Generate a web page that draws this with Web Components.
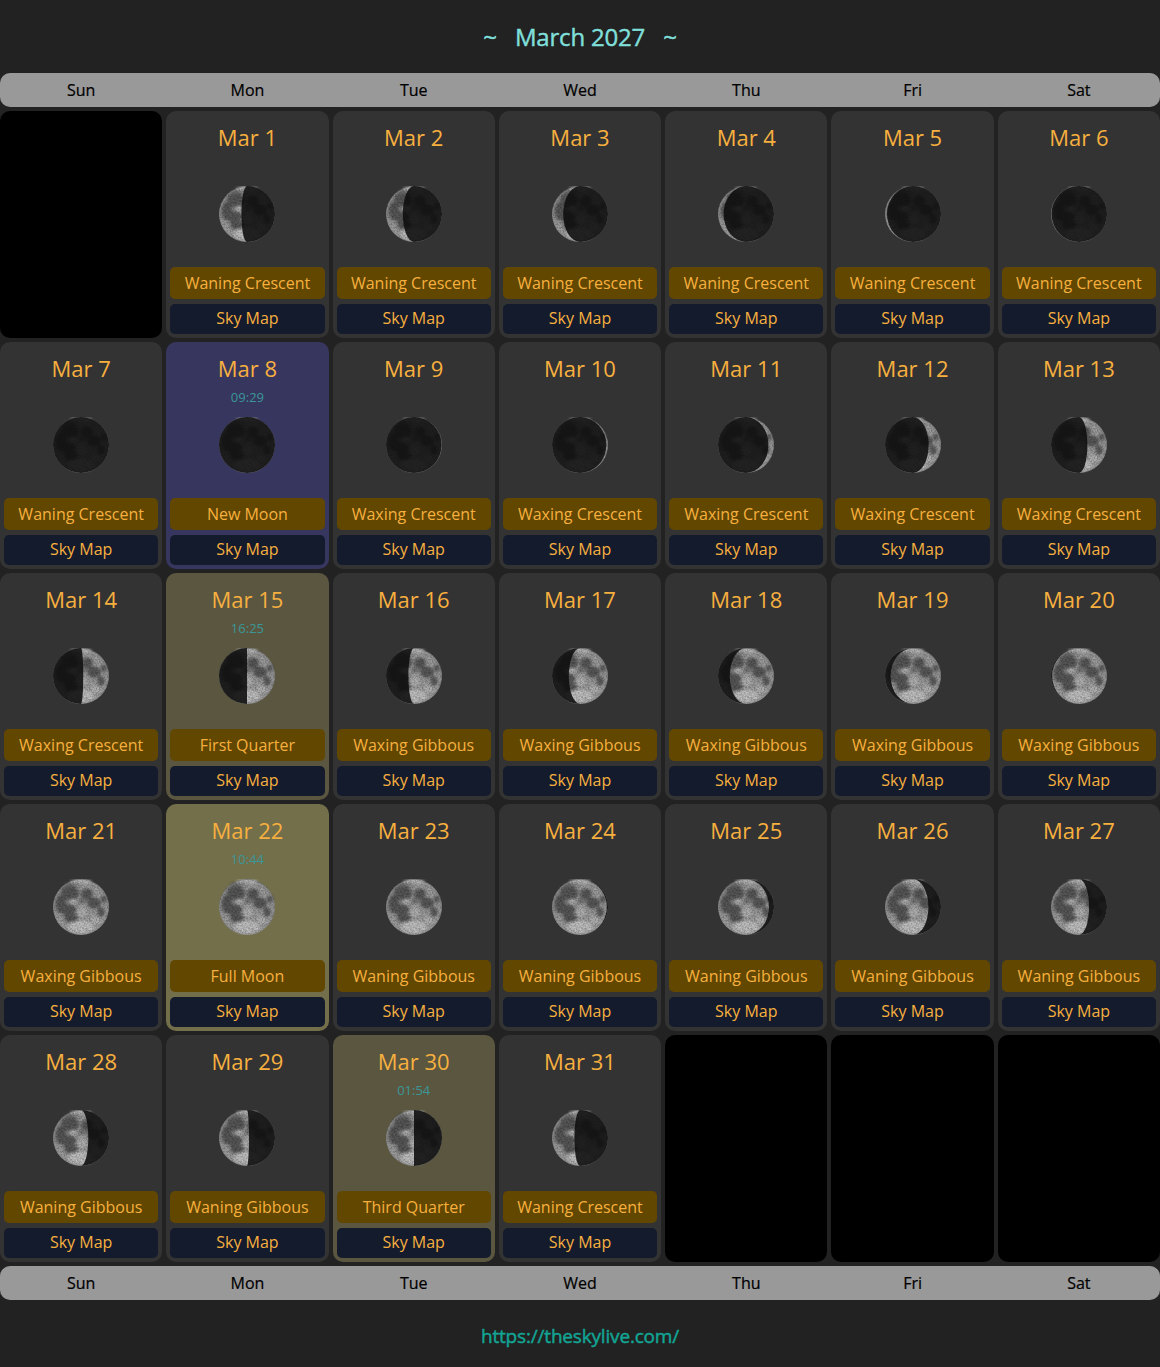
<!DOCTYPE html>
<html>
<head>
<meta charset="utf-8">
<title>March 2027</title>
<style>
    html, body { margin: 0; background: #222222; }
    body { font-family: "Open Sans", "Noto Sans", sans-serif; }
</style>
</head>
<body>
<moon-calendar></moon-calendar>
<script>
// moon picture: same face for every day, only the shadow changes
const MOON_FACE = `
    <defs>
        <radialGradient id="base" cx="50%" cy="52%" r="52%">
            <stop offset="0" stop-color="#9a9a9a"/>
            <stop offset=".84" stop-color="#9c9c9c"/>
            <stop offset=".95" stop-color="#909090"/>
            <stop offset="1" stop-color="#6a6a6a"/>
        </radialGradient>
        <filter id="soft" x="-20%" y="-20%" width="140%" height="140%" color-interpolation-filters="sRGB">
            <feGaussianBlur stdDeviation="1.5"/>
        </filter>
        <filter id="grain" x="0" y="0" width="1" height="1" color-interpolation-filters="sRGB">
            <feTurbulence type="fractalNoise" baseFrequency=".6" numOctaves="2" seed="7" result="n"/>
            <feColorMatrix in="n" type="matrix" values="0 0 0 0 0  0 0 0 0 0  0 0 0 0 0  .62 0 0 0 -.22" result="a"/>
            <feComposite in="a" in2="SourceAlpha" operator="in" result="spots"/>
            <feMerge><feMergeNode in="SourceGraphic"/><feMergeNode in="spots"/></feMerge>
        </filter>
    </defs>
    <g filter="url(#grain)">
        <circle r="28" fill="url(#base)"/>
        <g filter="url(#soft)" fill="#565656">
            <ellipse cx="-11" cy="-14" rx="9.5" ry="7.5"/>
            <ellipse cx="-20" cy="-3" rx="5.5" ry="9.5"/>
            <ellipse cx="-13" cy="3" rx="8" ry="6"/>
            <ellipse cx="-10" cy="11" rx="7" ry="4.5"/>
            <ellipse cx="6" cy="-13" rx="6" ry="5.5"/>
            <ellipse cx="13" cy="-4" rx="7" ry="5.5"/>
            <ellipse cx="20" cy="5" rx="3.5" ry="5"/>
            <ellipse cx="23" cy="-8" rx="2.8" ry="3.6"/>
            <ellipse cx="-8" cy="-23" rx="9" ry="1.3" opacity=".7"/>
            <ellipse cx="1" cy="-6" rx="3.5" ry="2.5" opacity=".7"/>
        </g>
        <g filter="url(#soft)" fill="#cfcfcf">
            <ellipse cx="0" cy="20" rx="13" ry="6.5" opacity=".7"/>
            <ellipse cx="-8" cy="-6" rx="2.6" ry="2.2" opacity=".75"/>
            <ellipse cx="0" cy="-25.5" rx="11" ry="1.6" opacity=".85"/>
            <ellipse cx="1" cy="5" rx="4.5" ry="5" opacity=".45"/>
            <ellipse cx="15" cy="13" rx="5" ry="3.5" opacity=".4"/>
        </g>
    </g>`;

class MoonImage extends HTMLElement {
    connectedCallback() {
        const root = this.shadowRoot || this.attachShadow({ mode: 'open' });
        // t: place of the terminator, -1 left limb .. 1 right limb
        const t = parseFloat(this.getAttribute('t'));
        const waxing = this.getAttribute('side') === 'wax';
        const rx = (Math.abs(t) * 28).toFixed(2);
        const sweep = t > 0 ? 0 : 1;
        const limb = waxing ? 0 : 1;
        const shadow = `M0,-28 A28,28 0 0 ${limb} 0,28 A${rx},28 0 0 ${sweep} 0,-28 Z`;
        root.innerHTML = `
            <style>
                :host { display: block; width: 56px; height: 56px; }
                svg { display: block; }
            </style>
            <svg width="56" height="56" viewBox="-28 -28 56 56" role="img" aria-label="moon">
                ${MOON_FACE}
                <path d="${shadow}" fill="#0c0c0c" fill-opacity=".88"/>
            </svg>`;
    }
}

class WeekBar extends HTMLElement {
    connectedCallback() {
        const root = this.shadowRoot || this.attachShadow({ mode: 'open' });
        const days = ['Sun', 'Mon', 'Tue', 'Wed', 'Thu', 'Fri', 'Sat'];
        root.innerHTML = `
            <style>
                :host {
                    display: grid;
                    grid-template-columns: repeat(7, 1fr);
                    column-gap: 4px;
                    height: 34px;
                    background: #999999;
                    border-radius: 10px;
                    color: #000000;
                    font-size: 16px;
                    line-height: 34px;
                    text-align: center;
                    -webkit-text-stroke: .2px #000000;
                }
            </style>
            ${days.map(d => `<div>${d}</div>`).join('')}`;
    }
}

class DayCell extends HTMLElement {
    connectedCallback() {
        const root = this.shadowRoot || this.attachShadow({ mode: 'open' });
        const time = this.getAttribute('time');
        root.innerHTML = `
            <style>
                :host {
                    display: flex;
                    flex-direction: column;
                    box-sizing: border-box;
                    height: 227px;
                    padding: 4px;
                    background: #333333;
                    border-radius: 10px;
                    color: #f7b03f;
                    text-align: center;
                }
                :host([kind="new"]) { background: #37365e; }
                :host([kind="quarter"]) { background: #5a5640; }
                :host([kind="full"]) { background: #736f4b; }
                .head { height: 71px; }
                .date { height: 44px; font-size: 22px; line-height: 45px; }
                .time { height: 16px; font-size: 13px; line-height: 14px; color: #3a9698; }
                .moon { display: flex; justify-content: center; height: 81px; }
                .phase, .map { border-radius: 5px; font-size: 16px; }
                .phase { height: 32px; line-height: 33px; margin-bottom: 5px; background: #614700; }
                .map { height: 30px; line-height: 29px; background: #141b2d; }
            </style>
            <div class="head">
                <div class="date"><slot></slot></div>
                ${time ? `<div class="time">${time}</div>` : ''}
            </div>
            <div class="moon"><slot name="moon"></slot></div>
            <div class="phase"><slot name="phase"></slot></div>
            <div class="map">Sky Map</div>`;
    }
}

class EmptyCell extends HTMLElement {
    connectedCallback() {
        const root = this.shadowRoot || this.attachShadow({ mode: 'open' });
        root.innerHTML = `
            <style>
                :host { display: block; height: 227px; background: #000000; border-radius: 10px; }
            </style>`;
    }
}

// [day, phase name, side, t, time, kind]
const DAYS = [
    [1, 'Waning Crescent', 'wane', -.2],
    [2, 'Waning Crescent', 'wane', -.4],
    [3, 'Waning Crescent', 'wane', -.6],
    [4, 'Waning Crescent', 'wane', -.8],
    [5, 'Waning Crescent', 'wane', -.93],
    [6, 'Waning Crescent', 'wane', -.98],
    [7, 'Waning Crescent', 'wane', -1],
    [8, 'New Moon', 'wax', 1, '09:29', 'new'],
    [9, 'Waxing Crescent', 'wax', .985],
    [10, 'Waxing Crescent', 'wax', .94],
    [11, 'Waxing Crescent', 'wax', .8],
    [12, 'Waxing Crescent', 'wax', .56],
    [13, 'Waxing Crescent', 'wax', .3],
    [14, 'Waxing Crescent', 'wax', .08],
    [15, 'First Quarter', 'wax', 0, '16:25', 'quarter'],
    [16, 'Waxing Gibbous', 'wax', -.2],
    [17, 'Waxing Gibbous', 'wax', -.4],
    [18, 'Waxing Gibbous', 'wax', -.58],
    [19, 'Waxing Gibbous', 'wax', -.8],
    [20, 'Waxing Gibbous', 'wax', -.96],
    [21, 'Waxing Gibbous', 'wax', -1],
    [22, 'Full Moon', 'wax', -1, '10:44', 'full'],
    [23, 'Waning Gibbous', 'wane', 1],
    [24, 'Waning Gibbous', 'wane', .96],
    [25, 'Waning Gibbous', 'wane', .82],
    [26, 'Waning Gibbous', 'wane', .55],
    [27, 'Waning Gibbous', 'wane', .36],
    [28, 'Waning Gibbous', 'wane', .26],
    [29, 'Waning Gibbous', 'wane', .07],
    [30, 'Third Quarter', 'wane', 0, '01:54', 'quarter'],
    [31, 'Waning Crescent', 'wane', -.2],
];

class MoonCalendar extends HTMLElement {
    connectedCallback() {
        const root = this.shadowRoot || this.attachShadow({ mode: 'open' });
        const cells = DAYS.map(([day, phase, side, t, time, kind]) => `
            <day-cell ${time ? `time="${time}"` : ''} ${kind ? `kind="${kind}"` : ''}>Mar ${day}
                <moon-image slot="moon" side="${side}" t="${t}"></moon-image>
                <span slot="phase">${phase}</span>
            </day-cell>`).join('');
        root.innerHTML = `
            <style>
                :host { display: block; font-family: "Open Sans", "Noto Sans", sans-serif; }
                h1 {
                    margin: 0;
                    height: 73px;
                    font-size: 24px;
                    font-weight: 400;
                    line-height: 74px;
                    text-align: center;
                    color: #7fdfd9;
                    letter-spacing: -.2px;
                    -webkit-text-stroke: .45px #7fdfd9;
                }
                .grid {
                    display: grid;
                    grid-template-columns: repeat(7, 1fr);
                    gap: 4px;
                    margin: 4px 0;
                }
                footer {
                    height: 67px;
                    font-size: 19px;
                    font-weight: 400;
                    line-height: 73px;
                    text-align: center;
                    color: #12a594;
                    letter-spacing: -.18px;
                    -webkit-text-stroke: .45px #12a594;
                }
            </style>
            <h1>~&nbsp;&nbsp;&nbsp;March 2027&nbsp;&nbsp;&nbsp;~</h1>
            <week-bar></week-bar>
            <div class="grid">
                <empty-cell></empty-cell>
                ${cells}
                <empty-cell></empty-cell>
                <empty-cell></empty-cell>
                <empty-cell></empty-cell>
            </div>
            <week-bar></week-bar>
            <footer>https://theskylive.com/</footer>`;
    }
}

customElements.define('moon-image', MoonImage);
customElements.define('week-bar', WeekBar);
customElements.define('day-cell', DayCell);
customElements.define('empty-cell', EmptyCell);
customElements.define('moon-calendar', MoonCalendar);
</script>
</body>
</html>
